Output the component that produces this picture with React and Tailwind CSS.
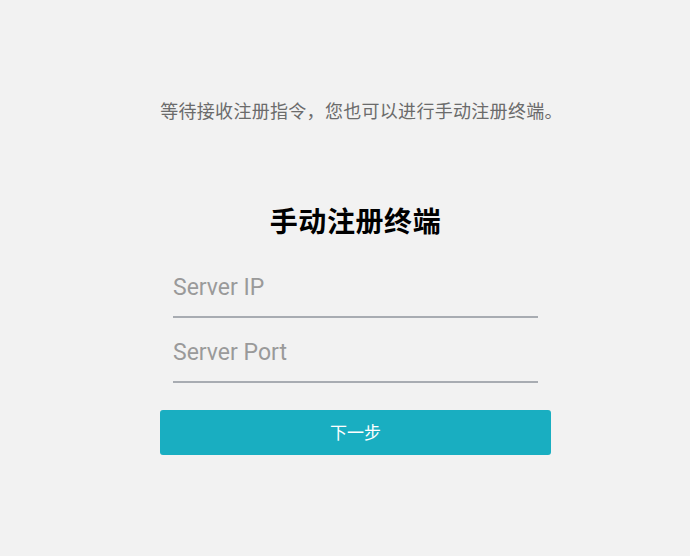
import React from "react";

export default function App() {
  return (
    <div
      className="w-[690px] h-[556px] bg-[#f2f2f2] flex flex-col items-center pl-[21px]"
      style={{ fontFamily: '"Roboto", "Noto Sans CJK SC", sans-serif' }}
    >
      <p className="mt-[99px] ml-[12px] text-[18px] leading-[26px] tracking-[0.3px] text-[#6b6b6b]">
        等待接收注册指令，您也可以进行手动注册终端。
      </p>
      <h1 className="mt-[83px] text-[28px] leading-[30px] font-bold tracking-[0.6px] text-black">
        手动注册终端
      </h1>
      <div className="w-[391px] mt-[28px] flex flex-col">
        <div className="px-[13px]">
          <input
            placeholder="Server IP"
            className="w-full h-[52px] bg-transparent outline-none text-[23px] text-[#333] placeholder:text-[#9a9a9a] border-b-2 border-[#a8acb2] pt-0 pb-[8px]"
          />
          <input
            placeholder="Server Port"
            className="w-full mt-[13px] h-[52px] bg-transparent outline-none text-[23px] text-[#333] placeholder:text-[#9a9a9a] border-b-2 border-[#a8acb2] pt-0 pb-[8px]"
          />
        </div>
        <button className="mt-[27px] h-[45px] w-full rounded-[3px] bg-[#19aec1] text-white text-[17px] pt-[3px]">
          下一步
        </button>
      </div>
    </div>
  );
}
